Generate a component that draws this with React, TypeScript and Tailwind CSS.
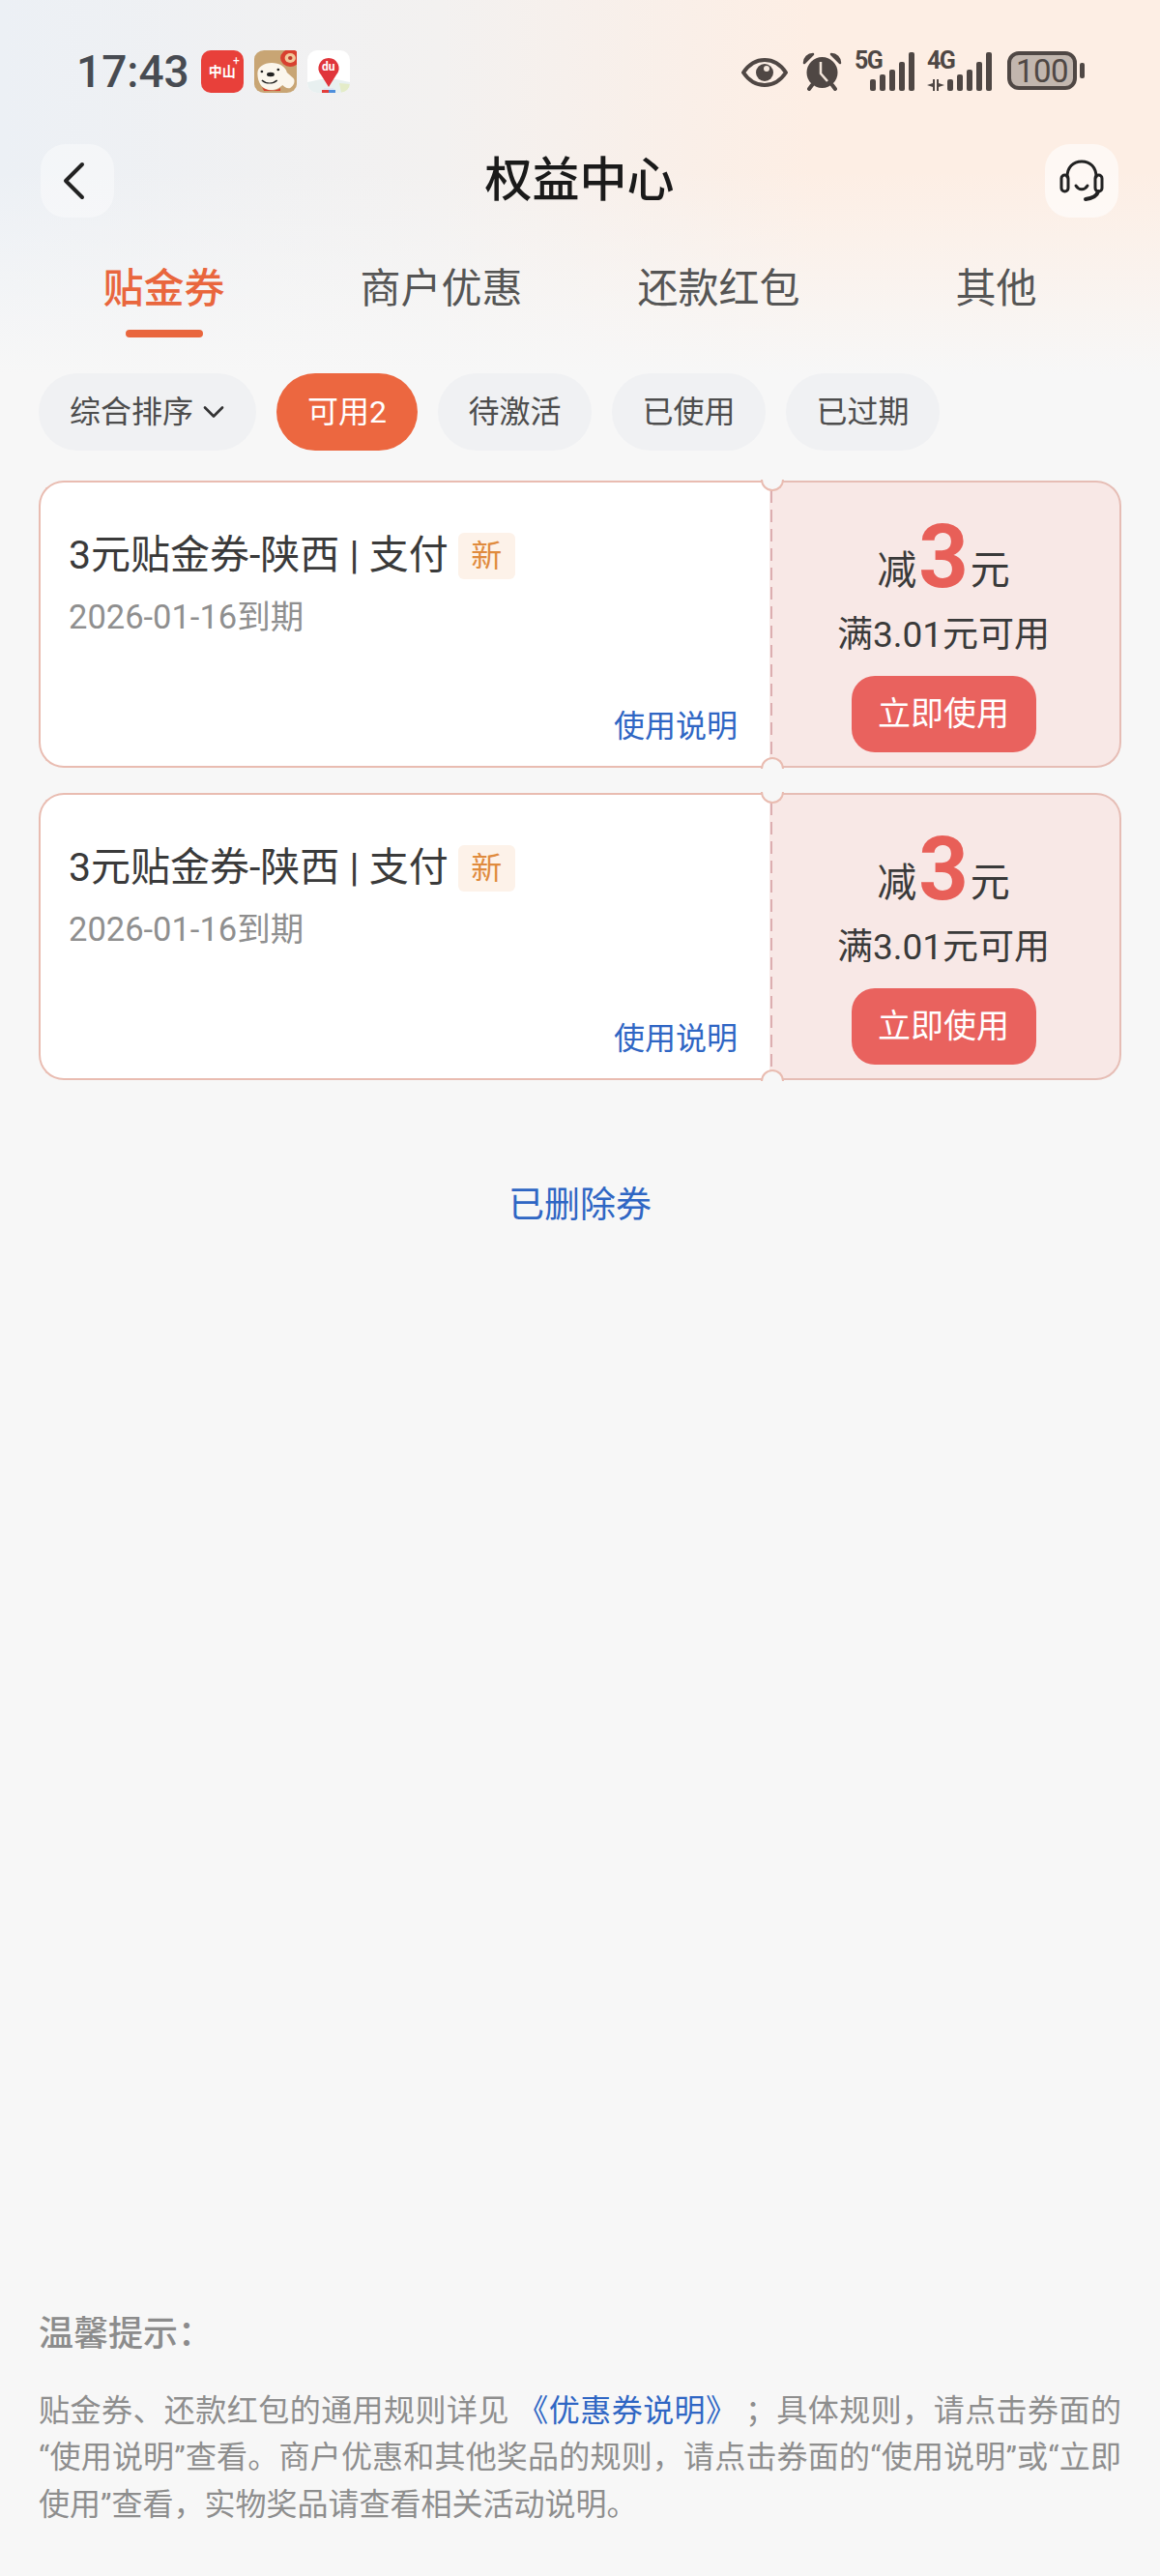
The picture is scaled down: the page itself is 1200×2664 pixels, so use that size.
import { ChevronDown } from 'lucide-react';

const FILTERS = ['待激活', '已使用', '已过期'];
const TABS = ['贴金券', '商户优惠', '还款红包', '其他'];

function Bars({ className = '' }: { className?: string }) {
    const heights = [12, 17, 22, 30, 40];
    return (
        <div className={`flex items-end gap-[4px] ${className}`}>
            {heights.map((h) => (
                <span key={h} className="w-[6px] rounded-[2px] bg-[#4f4744]" style={{ height: h }} />
            ))}
        </div>
    );
}

function DogIcon() {
    return (
        <svg width="44" height="44" viewBox="0 0 39 44" preserveAspectRatio="none">
            <rect width="39" height="44" rx="9" fill="#c8a574" />
            <circle cx="33" cy="8" r="9" fill="#d8402f" />
            <circle cx="33" cy="8" r="5" fill="#f2c79a" />
            <circle cx="33" cy="8" r="2" fill="#c0392b" />
            <path d="M3 24c0-7 6-11 13-11s13 4 14 10l6 6c2 3 0 8-3 10-3 1-5-1-7-3-3 3-6 5-11 5C7 41 3 33 3 24z" fill="#fbf6ec" />
            <path d="M7 38c4 4 12 5 17 1v3H9z" fill="#d8402f" />
            <ellipse cx="15" cy="25" rx="3.5" ry="2.2" fill="#222" />
            <circle cx="7" cy="22" r="1.2" fill="#222" />
            <circle cx="22" cy="20" r="1.2" fill="#222" />
            <path d="M7 31c4 4 10 4 14 0" fill="none" stroke="#222" strokeWidth="1.2" />
        </svg>
    );
}

function MapIcon() {
    return (
        <div className="relative w-[44px] h-[44px] rounded-[10px] overflow-hidden bg-white">
            <svg className="absolute inset-0" width="44" height="44" viewBox="0 0 44 44">
                <path d="M0 33l14-3h16l14 3v11H0z" fill="#e8f0f0" />
                <path d="M33 34l11 1v6l-9 3z" fill="#e4ecc8" />
                <path d="M17 39h10l2 5H15z" fill="#dfe6f2" />
                <path d="M15 41h7v3h-7z" fill="#e33d3a" />
                <path d="M22 41h7v3h-7z" fill="#4f8fdc" />
                <path d="M22 8a10.500 10.500 0 0 1 8 17.300l-8 12.700-8-12.700a10.500 10.500 0 0 1 8-17.300z" fill="#e0353b" />
            </svg>
            <span className="absolute left-0 right-0 top-[10px] text-center text-[12px] leading-[14px] font-bold text-white">du</span>
        </div>
    );
}

function Coupon() {
    return (
        <div className="relative flex h-[297px]">
            <div className="flex-1 flex flex-col bg-white border-2 border-r-0 border-[#e9bcb1] rounded-l-[26px] pl-[29px] pr-[33px] pt-[51px]">
                <div className="flex items-center h-[48px]">
                    <span className="text-[41px] leading-[48px] text-[#3a3a3a]">3元贴金券-陕西 | 支付</span>
                    <span className="ml-[10px] mt-[2px] w-[59px] h-[48px] flex items-center justify-center rounded-[6px] bg-[#fdf2e9] text-[32px] text-[#e08b3e]">新</span>
                </div>
                <div className="mt-[20px] text-[34.500px] leading-[40px] text-[#8f8f8f]">2026-01-16到期</div>
                <div className="mt-auto mb-[21px] self-end text-[32px] leading-[40px] text-[#2f66c4]">使用说明</div>
            </div>
            <div className="w-[364px] flex flex-col items-center bg-[#f8e8e6] border-2 border-l-0 border-[#e6bdb5] rounded-r-[26px]">
                <div className="mt-[31px] -ml-[2px] flex items-baseline gap-[2px] text-[41px] leading-[87px] text-[#3a3a3a]">
                    <span>减</span>
                    <span className="translate-y-[3px] text-[90px] font-bold text-[#e85f58]">3</span>
                    <span>元</span>
                </div>
                <div className="-mt-[1px] -ml-[2px] text-[37px] leading-[48px] text-[#3a3a3a]">满3.01元可用</div>
                <div className="mt-[18px] -ml-[2px] w-[191px] h-[79px] flex items-center justify-center rounded-[24px] bg-[#e9625e] text-[34px] text-white">立即使用</div>
            </div>
            {/* dashed tear line + notches */}
            <span className="absolute left-[757px] top-[10px] bottom-[10px] w-[2px] bg-[repeating-linear-gradient(180deg,#dcaeb0_0px,#dcaeb0_13px,transparent_13px,transparent_20px)]" />
            <span className="absolute left-[747px] -top-[1px] w-[24px] h-[12px] bg-[#f7f7f7] border-2 border-t-0 border-[#e9bcb1] rounded-b-[12px]" />
            <span className="absolute left-[747px] -bottom-[1px] w-[24px] h-[12px] bg-[#f7f7f7] border-2 border-b-0 border-[#e9bcb1] rounded-t-[12px]" />
        </div>
    );
}

export default function App() {
    return (
        <div className="min-h-screen flex flex-col bg-[#f7f7f7] bg-no-repeat bg-[size:100%_440px] bg-[linear-gradient(180deg,rgba(247,247,247,0)_40%,#f7f7f7_88%),linear-gradient(90deg,#ecf0f5_0%,#f3f1f0_38%,#fdeee4_70%,#fdeee4_100%)] font-['Roboto','Noto_Sans_CJK_SC',sans-serif]">
            {/* status bar */}
            <div className="h-[149px] pt-[52px] pl-[79px] pr-[78px] flex items-start">
                <span className="text-[46px] leading-[44px] font-medium text-[#474b52]">17:43</span>
                <div className="ml-[12px] flex gap-[11px]">
                    <div className="relative w-[44px] h-[44px] rounded-[10px] bg-[#e8403a] flex items-center justify-center">
                        <span className="text-[14px] font-bold leading-none text-white">中山</span>
                        <span className="absolute right-[4px] top-[5px] text-[12px] leading-none text-white">+</span>
                    </div>
                    <DogIcon />
                    <MapIcon />
                </div>
                <div className="ml-auto flex items-start">
                    <svg className="mt-[7px]" width="48" height="32" viewBox="0 0 48 32">
                        <path d="M2 16C8 7 15 3 24 3s16 4 22 13c-6 9-13 13-22 13S8 25 2 16z" fill="none" stroke="#4f4744" strokeWidth="4" strokeLinejoin="round" />
                        <circle cx="24" cy="16" r="9" fill="#4f4744" />
                        <circle cx="26" cy="12" r="3" fill="#f3e6dc" />
                    </svg>
                    <svg className="ml-[15px] mt-[2px]" width="41" height="40" viewBox="0 0 41 40">
                        <circle cx="20.500" cy="21" r="16" fill="#4f4744" />
                        <path d="M2 11c0-5 4-9 9-9l-9 9zM39 11c0-5-4-9-9-9l9 9z" fill="#4f4744" stroke="#4f4744" strokeWidth="2.500" strokeLinejoin="round" />
                        <path d="M7 38l3-4M34 38l-3-4" stroke="#4f4744" strokeWidth="4" strokeLinecap="round" />
                        <path d="M19 10v12l7 8" fill="none" stroke="#f3e6dc" strokeWidth="2.500" />
                    </svg>
                    <div className="relative ml-[13px] w-[62px] h-[40px] mt-[2px]">
                        <span className="absolute left-0 top-0 text-[25px] leading-[18px] font-bold tracking-[-1.500px] text-[#4f4744]">5G</span>
                        <Bars className="absolute right-0 bottom-0" />
                    </div>
                    <div className="relative ml-[13px] w-[67px] h-[40px] mt-[2px]">
                        <span className="absolute left-0 top-0 text-[25px] leading-[18px] font-bold tracking-[-1.500px] text-[#4f4744]">4G</span>
                        <svg className="absolute left-0 bottom-0" width="18" height="12" viewBox="0 0 18 12">
                            <path d="M8 0v12H6V8L0 6l6-2V0zM10 0v12h2V8l6-2-6-2V0z" fill="#4f4744" />
                        </svg>
                        <Bars className="absolute right-0 bottom-0" />
                    </div>
                    <div className="ml-[16px] mt-[1px] w-[72px] h-[40px] flex items-center justify-center rounded-[12px] border-[4px] border-[#4f4744] bg-[#c2b6ae] text-[33px] leading-none tracking-[-0.5px] text-[#4f4744]">100</div>
                    <span className="ml-[3px] mt-[13px] w-[5px] h-[16px] rounded-[2px] bg-[#4f4744]" />
                </div>
            </div>

            {/* nav */}
            <div className="h-[76px] pl-[42px] pr-[43px] flex items-center justify-between">
                <div className="w-[76px] h-[76px] rounded-[26px] bg-white/40 flex items-center justify-center">
                    <svg width="24" height="40" viewBox="0 0 24 40" className="-ml-[8px]">
                        <path d="M21 3L4 20l17 17" fill="none" stroke="#222222" strokeWidth="4" strokeLinecap="round" strokeLinejoin="round" />
                    </svg>
                </div>
                <span className="text-[49px] leading-[56px] font-medium text-[#1a1a1a]">权益中心</span>
                <div className="w-[76px] h-[76px] rounded-[26px] bg-white/60 flex items-center justify-center">
                    <svg width="46" height="44" viewBox="0 0 46 44" fill="none" stroke="#222222" strokeWidth="3" strokeLinecap="round">
                        <path d="M8 18C8 8 14 2 23 2s15 6 15 16" />
                        <rect x="2" y="16" width="7" height="17" rx="3.500" />
                        <rect x="37" y="16" width="7" height="17" rx="3.500" />
                        <path d="M17 27c3 5 9 5 12 0" />
                        <path d="M40 33c-1 4-6 7-13 8" strokeWidth="4" />
                    </svg>
                </div>
            </div>

            {/* tabs */}
            <div className="mt-[48px] px-[26px] grid grid-cols-4">
                {TABS.map((tab, i) => (
                    <div key={tab} className="flex flex-col items-center">
                        <span className={`text-[42px] leading-[52px] ${i === 0 ? 'font-medium text-[#e9663d]' : 'text-[#555555]'}`}>{tab}</span>
                        {i === 0 && <span className="mt-[16px] w-[80px] h-[8px] rounded-full bg-[#e9663d]" />}
                    </div>
                ))}
            </div>

            {/* filters */}
            <div className="mt-[37px] pl-[40px] flex gap-[21px]">
                <div className="h-[80px] w-[225px] pl-[32px] rounded-full bg-[#f0f1f3] flex items-center text-[32px] text-[#4d4d4d]">
                    综合排序
                    <ChevronDown className="ml-[3px] w-[36px] h-[36px] text-[#333333]" strokeWidth={1.800} />
                </div>
                <div className="h-[80px] px-[32px] rounded-full bg-[#ec6740] flex items-center text-[32px] text-white">可用2</div>
                {FILTERS.map((f) => (
                    <div key={f} className="h-[80px] px-[31.500px] rounded-full bg-[#f0f1f3] flex items-center text-[32px] text-[#4d4d4d]">{f}</div>
                ))}
            </div>

            {/* coupons */}
            <div className="mt-[31px] px-[40px] flex flex-col gap-[26px]">
                <Coupon />
                <Coupon />
            </div>

            <div className="mt-[104px] text-center text-[37px] leading-[52px] text-[#2f66c4]">已删除券</div>

            {/* tips */}
            <div className="mt-auto px-[40px] pb-[50px]">
                <div className="text-[36px] leading-[50px] font-medium text-[#8c8c8c]">温馨提示：</div>
                <p className="mt-[30px] text-[32px] leading-[48.500px] text-justify text-[#8e8e8e]">
                    贴金券、还款红包的通用规则详见 <span className="text-[#2f66c4]">《优惠券说明》</span> ；具体规则，请点击券面的<wbr />“使用说明”查看。商户优惠和其他奖品的规则，请点击券面的“使用说明”或“立即<wbr />使用”查看，实物奖品请查看相关活动说明。
                </p>
            </div>
        </div>
    );
}
